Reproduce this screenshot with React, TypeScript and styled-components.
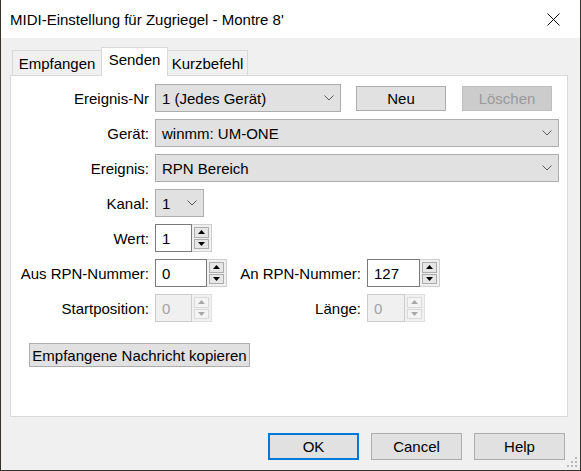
import React from "react";
import styled, { createGlobalStyle, css } from "styled-components";

const Global = createGlobalStyle`
  html, body { margin: 0; padding: 0; background: #ffffff; }
  body {
    font-family: "Liberation Sans", Arial, sans-serif;
    font-size: 15px;
    color: #000;
  }
  * { box-sizing: border-box; }
`;

const Window = styled.div`
  position: relative;
  width: 581px;
  height: 471px;
  display: flex;
  flex-direction: column;
  background: #f0f0f0;
  border: 1px solid #37312b;
  border-top: none;
`;

const TitleBar = styled.div`
  height: 38px;
  flex: none;
  background: #ffffff;
  display: flex;
  align-items: center;
  justify-content: space-between;
  padding-left: 9px;
`;

const TitleText = styled.div`
  font-size: 15px;
  line-height: 18px;
  padding-top: 1px;
`;

const CloseBox = styled.div`
  width: 46px;
  height: 38px;
  margin-right: 4px;
  display: flex;
  align-items: center;
  justify-content: center;
`;

const Client = styled.div`
  flex: 1;
  display: flex;
  flex-direction: column;
  padding: 9px 0 0 9px;
`;

const TabStrip = styled.div`
  display: flex;
  align-items: flex-end;
  height: 28px;
  padding-left: 3px;
  position: relative;
  z-index: 1;
`;

const Tab = styled.div<{ $w: number; $active?: boolean }>`
  width: ${(p) => p.$w}px;
  height: 25px;
  display: flex;
  align-items: center;
  justify-content: center;
  border: 1px solid #d9d9d9;
  border-bottom: none;
  background: #f0f0f0;
  margin-left: -1px;
  line-height: 18px;
  padding-top: 1px;
  ${(p) =>
    p.$active &&
    css`
      height: 29px;
      margin-bottom: -1px;
      background: #ffffff;
      padding-top: 0;
      padding-bottom: 4px;
      position: relative;
      z-index: 2;
    `}
`;

const TabPanel = styled.div`
  width: 558px;
  height: 342px;
  background: #ffffff;
  border: 1px solid #d9d9d9;
  padding-top: 8px;
  display: flex;
  flex-direction: column;
  gap: 7px;
`;

const Row = styled.div`
  display: flex;
  align-items: center;
  height: 28px;
`;

const Label = styled.div<{ $w: number }>`
  width: ${(p) => p.$w}px;
  flex: none;
  text-align: right;
  padding-right: 6px;
  white-space: nowrap;
`;

const Combo = styled.div<{ $w: number }>`
  width: ${(p) => p.$w}px;
  height: 28px;
  flex: none;
  display: flex;
  align-items: center;
  justify-content: space-between;
  background: #e1e1e1;
  border: 1px solid #adadad;
  padding: 0 6px 0 6px;
`;

const PushButton = styled.div<{ $w: number; $ml?: number; $disabled?: boolean }>`
  width: ${(p) => p.$w}px;
  height: 25px;
  flex: none;
  margin-left: ${(p) => p.$ml ?? 0}px;
  display: flex;
  align-items: center;
  justify-content: center;
  background: #e1e1e1;
  border: 1px solid #adadad;
  ${(p) =>
    p.$disabled &&
    css`
      background: #cccccc;
      border-color: #bfbfbf;
      color: #9a9a9a;
    `}
`;

const WideButton = styled(PushButton)`
  height: 24px;
  margin-top: 14px;
  white-space: nowrap;
`;

const SpinBox = styled.div`
  display: flex;
  height: 28px;
  flex: none;
`;

const SpinEdit = styled.div<{ $w: number; $disabled?: boolean }>`
  width: ${(p) => p.$w}px;
  height: 100%;
  display: flex;
  align-items: center;
  padding-left: 6px;
  background: #ffffff;
  border: 1px solid #7a7a7a;
  ${(p) =>
    p.$disabled &&
    css`
      background: #f0f0f0;
      border-color: #cccccc;
      color: #a3a3a3;
    `}
`;

const Spinner = styled.div<{ $disabled?: boolean }>`
  width: 20px;
  height: 100%;
  display: flex;
  flex-direction: column;
  gap: 1px;
  padding: 2px;
  background: #f0f0f0;
  border: 1px solid ${(p) => (p.$disabled ? "#e0e0e0" : "#cfcfcf")};
  border-left: none;
`;

const SpinBtn = styled.div<{ $disabled?: boolean }>`
  flex: 1;
  display: flex;
  align-items: center;
  justify-content: center;
  background: ${(p) => (p.$disabled ? "#f4f4f4" : "#e6e6e6")};
  border: 1px solid ${(p) => (p.$disabled ? "#d9d9d9" : "#adadad")};
`;

const Footer = styled.div`
  display: flex;
  justify-content: flex-end;
  gap: 12px;
  padding: 16px 15px 0 0;
`;

const DialogButton = styled.div<{ $default?: boolean }>`
  width: 91px;
  height: 27px;
  display: flex;
  align-items: center;
  justify-content: center;
  background: #e1e1e1;
  border: 1px solid #adadad;
  ${(p) =>
    p.$default &&
    css`
      border: 2px solid #0078d7;
    `}
`;

const Grip = styled.svg`
  position: absolute;
  right: 2px;
  bottom: 2px;
`;

const Chevron = () => (
  <svg width="10" height="6" viewBox="0 0 10 6">
    <path d="M0.5 0.5 L5 5 L9.5 0.5" fill="none" stroke="#5a5a5a" strokeWidth="1" />
  </svg>
);

const Arrow = ({ up, color }: { up?: boolean; color: string }) => (
  <svg width="7" height="4" viewBox="0 0 7 4">
    <path d={up ? "M0 4 L3.5 0 L7 4 Z" : "M0 0 L7 0 L3.5 4 Z"} fill={color} />
  </svg>
);

const Spin = ({ value, w, disabled }: { value: string; w: number; disabled?: boolean }) => {
  const c = disabled ? "#a8a8a8" : "#000000";
  return (
    <SpinBox>
      <SpinEdit $w={w} $disabled={disabled}>
        {value}
      </SpinEdit>
      <Spinner $disabled={disabled}>
        <SpinBtn $disabled={disabled}>
          <Arrow up color={c} />
        </SpinBtn>
        <SpinBtn $disabled={disabled}>
          <Arrow color={c} />
        </SpinBtn>
      </Spinner>
    </SpinBox>
  );
};

export default function App() {
  return (
    <>
      <Global />
      <Window>
        <TitleBar>
          <TitleText>MIDI-Einstellung für Zugriegel - Montre 8'</TitleText>
          <CloseBox>
            <svg width="13" height="13" viewBox="0 0 13 13">
              <path d="M0.5 0.5 L12.5 12.5 M12.5 0.5 L0.5 12.5" stroke="#000" strokeWidth="1" />
            </svg>
          </CloseBox>
        </TitleBar>
        <Client>
          <TabStrip>
            <Tab $w={90}>Empfangen</Tab>
            <Tab $w={67} $active>
              Senden
            </Tab>
            <Tab $w={81}>Kurzbefehl</Tab>
          </TabStrip>
          <TabPanel>
            <Row>
              <Label $w={144}>Ereignis-Nr</Label>
              <Combo $w={186}>
                <span>1 (Jedes Gerät)</span>
                <Chevron />
              </Combo>
              <PushButton $w={90} $ml={15}>
                Neu
              </PushButton>
              <PushButton $w={90} $ml={16} $disabled>
                Löschen
              </PushButton>
            </Row>
            <Row>
              <Label $w={144}>Gerät:</Label>
              <Combo $w={404}>
                <span>winmm: UM-ONE</span>
                <Chevron />
              </Combo>
            </Row>
            <Row>
              <Label $w={144}>Ereignis:</Label>
              <Combo $w={404}>
                <span>RPN Bereich</span>
                <Chevron />
              </Combo>
            </Row>
            <Row>
              <Label $w={144}>Kanal:</Label>
              <Combo $w={49}>
                <span>1</span>
                <Chevron />
              </Combo>
            </Row>
            <Row>
              <Label $w={144}>Wert:</Label>
              <Spin value="1" w={37} />
            </Row>
            <Row>
              <Label $w={144}>Aus RPN-Nummer:</Label>
              <Spin value="0" w={52} />
              <Label $w={140}>An RPN-Nummer:</Label>
              <Spin value="127" w={53} />
            </Row>
            <Row>
              <Label $w={144}>Startposition:</Label>
              <Spin value="0" w={37} disabled />
              <Label $w={155}>Länge:</Label>
              <Spin value="0" w={38} disabled />
            </Row>
            <WideButton as="div" $w={221} $ml={18}>
              Empfangene Nachricht kopieren
            </WideButton>
          </TabPanel>
          <Footer>
            <DialogButton $default>OK</DialogButton>
            <DialogButton>Cancel</DialogButton>
            <DialogButton>Help</DialogButton>
          </Footer>
        </Client>
        <Grip width="11" height="11" viewBox="0 0 11 11">
          {[
            [8, 0],
            [8, 4],
            [4, 4],
            [8, 8],
            [4, 8],
            [0, 8],
          ].map(([x, y], i) => (
            <rect key={i} x={x} y={y} width="2" height="2" fill="#b9b9b9" />
          ))}
        </Grip>
      </Window>
    </>
  );
}
